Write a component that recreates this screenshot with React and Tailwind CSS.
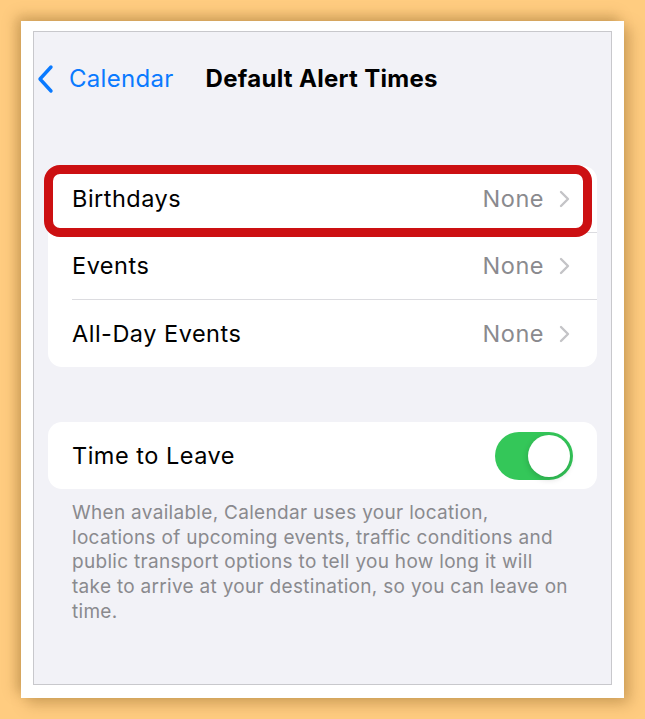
import React from "react";

const rows = [
  { label: "Birthdays", value: "None" },
  { label: "Events", value: "None" },
  { label: "All-Day Events", value: "None" },
];

const Chevron = () => (
  <svg width="14" height="20" viewBox="0 0 14 20" fill="none">
    <path d="M4 3l7 7-7 7" stroke="#c4c4c7" strokeWidth="2.4" strokeLinecap="round" strokeLinejoin="round" />
  </svg>
);

const BackChevron = () => (
  <svg width="18" height="30" viewBox="0 0 18 30" fill="none">
    <path d="M14 3L3 15l11 12" stroke="#0a7aff" strokeWidth="3.4" strokeLinecap="round" strokeLinejoin="round" />
  </svg>
);

const Toggle = ({ on }) => (
  <div className={`w-[78px] h-[48px] rounded-full p-[3px] flex ${on ? "bg-[#34c759] justify-end" : "bg-[#e9e9eb] justify-start"}`}>
    <div className="w-[42px] h-[42px] rounded-full bg-white shadow-[0_2px_6px_rgba(0,0,0,0.18)]" />
  </div>
);

export default function App() {
  return (
    <div className="w-[645px] h-[719px] bg-[#ffcc80] p-[21px] font-['Inter','Liberation_Sans',sans-serif]">
      <div className="w-[603px] h-[677px] bg-white pt-[10px] pb-[13px] px-[12px] shadow-[-5px_-5px_12px_rgba(130,90,30,0.35),6px_6px_14px_rgba(130,90,30,0.35)]">
        <div className="h-full border border-[#c8c8cc] bg-[#f2f2f7] px-[14px]">
          {/* nav bar */}
          <div className="h-[94px] flex items-center relative">
            <div className="flex items-center gap-[14px] text-[#0a7aff] text-[24px] tracking-[0.3px]">
              <span className="ml-[-11px] flex"><BackChevron /></span>
              <span>Calendar</span>
            </div>
            <div className="ml-[32px] text-[24px] font-bold tracking-[0.3px] text-black">Default Alert Times</div>
          </div>

          {/* alert rows */}
          <div className="mt-[40px] bg-white rounded-[14px] relative">
            {rows.map((r, i) => (
              <div key={r.label} className="h-[67px] pl-[24px] flex flex-col">
                <div className="flex-1 flex items-center pr-[26px]">
                  <span className="flex-1 text-[23.5px] tracking-[0.5px] text-black">{r.label}</span>
                  <span className="text-[23.5px] tracking-[0.5px] text-[#8a8a8e] mr-[13px]">{r.value}</span>
                  <Chevron />
                </div>
                {i < rows.length - 1 && <div className="h-px bg-[#dcdce0]" />}
              </div>
            ))}
            <div className="absolute left-[-4px] top-[-1px] w-[548px] h-[72px] border-[9px] border-[#cc1012] rounded-[16px] pointer-events-none" />
          </div>

          {/* time to leave */}
          <div className="mt-[55px] bg-white rounded-[14px] h-[67px] pl-[24px] pr-[24px] flex items-center">
            <span className="flex-1 text-[23.5px] tracking-[0.5px] text-black">Time to Leave</span>
            <Toggle on />
          </div>
          <p className="mt-[12px] pl-[24px] text-[19px] leading-[24.7px] tracking-[0.3px] text-[#8a8a8e] whitespace-nowrap">
            When available, Calendar uses your location,
            <br />
            locations of upcoming events, traffic conditions and
            <br />
            public transport options to tell you how long it will
            <br />
            take to arrive at your destination, so you can leave on
            <br />
            time.
          </p>
        </div>
      </div>
    </div>
  );
}
